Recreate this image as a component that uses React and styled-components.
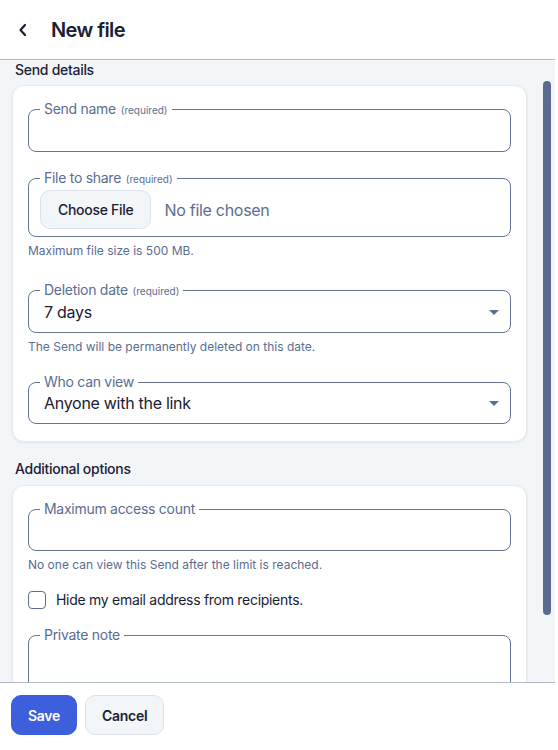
import React from "react";
import styled, { createGlobalStyle } from "styled-components";

const GlobalStyle = createGlobalStyle`
  html, body {
    margin: 0;
    padding: 0;
    background: #ffffff;
    font-family: Inter, "Noto Sans", sans-serif;
    letter-spacing: -0.018em;
    color: #1b2033;
  }
  * {
    box-sizing: border-box;
  }
  button, input {
    letter-spacing: inherit;
  }
`;

const Page = styled.div`
  display: flex;
  flex-direction: column;
  height: 750px;
  width: 555px;
  overflow: hidden;
`;

const Header = styled.header`
  display: flex;
  align-items: center;
  height: 60px;
  flex-shrink: 0;
  padding-left: 12px;
  border-bottom: 1px solid #b1b9cc;
  background: #ffffff;
`;

const BackButton = styled.button`
  display: flex;
  align-items: center;
  justify-content: center;
  width: 22px;
  height: 28px;
  padding: 0;
  margin-right: 17px;
  border: none;
  background: transparent;
  color: #1b2033;
`;

const Title = styled.h1`
  margin: 0;
  font-size: 20px;
  font-weight: 600;
  line-height: 28px;
  letter-spacing: -0.03em;
  color: #1b2033;
`;

const Body = styled.div`
  display: flex;
  flex: 1;
  min-height: 0;
  background: #f3f6f9;
`;

const Scroller = styled.main`
  flex: 1;
  overflow: hidden;
  padding: 0 12px;
`;

const Rail = styled.div`
  width: 16px;
  flex-shrink: 0;
  padding-left: 4px;
`;

const Thumb = styled.div`
  width: 8px;
  height: 534px;
  margin-top: 21px;
  border-radius: 4px;
  background: #5a6d91;
`;

const SectionTitle = styled.h2`
  margin: ${(p) => (p.$first ? "0 0 5px 3px" : "17px 0 6px 3px")};
  font-size: 14px;
  font-weight: 500;
  line-height: 20px;
  color: #1b2033;
`;

const Card = styled.section`
  background: #ffffff;
  border: 1px solid #e6e9ef;
  border-radius: 12px;
  padding: 15px 15px 17px;
  box-shadow: 0 1px 3px rgba(27, 32, 51, 0.08);
`;

const Group = styled.div`
  margin-bottom: ${(p) => p.$gap || "18px"};

  &:last-child {
    margin-bottom: 0;
  }
`;

const Fieldset = styled.fieldset`
  margin: 0;
  padding: 0 15px;
  border: 1px solid #63739a;
  border-radius: 8px;
  min-width: 0;
`;

const Legend = styled.legend`
  margin-left: -4px;
  padding: 0 4px;
  font-size: 14px;
  line-height: 16px;
  letter-spacing: -0.02em;
  color: #5a6d91;
`;

const Required = styled.span`
  font-size: 10px;
  margin-left: 2px;
  letter-spacing: 0;
`;

const TextInput = styled.input`
  display: block;
  width: 100%;
  height: 33px;
  padding: 0 0 7px;
  border: none;
  outline: none;
  background: transparent;
  font-family: inherit;
  font-size: 16px;
  color: #1b2033;
`;

const FileRow = styled.div`
  display: flex;
  align-items: center;
  gap: 13px;
  margin-left: -4px;
  padding: 3px 0 7px;
`;

const FileButton = styled.button`
  height: 39px;
  padding: 0 17px;
  border: 1px solid #dde2ea;
  border-radius: 10px;
  background: #f3f6f9;
  font-family: inherit;
  font-size: 14px;
  font-weight: 500;
  color: #1b2033;
`;

const FileStatus = styled.span`
  font-size: 16px;
  color: #5a6d91;
`;

const SelectBox = styled.div`
  display: flex;
  align-items: center;
  justify-content: space-between;
  height: 33px;
  padding-bottom: 7px;
  font-size: 16px;
  color: #1b2033;
`;

const Caret = styled.span`
  width: 0;
  height: 0;
  margin-right: -4px;
  border-left: 5px solid transparent;
  border-right: 5px solid transparent;
  border-top: 5px solid #5a6d91;
`;

const Hint = styled.p`
  margin: 6px 0 0;
  font-size: 12px;
  line-height: 16px;
  letter-spacing: 0;
  color: #5a6d91;
`;

const CheckRow = styled.label`
  display: flex;
  align-items: center;
  gap: 10px;
  font-size: 14px;
  line-height: 20px;
  color: #1b2033;
`;

const Box = styled.span`
  width: 18px;
  height: 18px;
  border: 1.5px solid #5a6d91;
  border-radius: 4px;
  background: #ffffff;
`;

const NoteArea = styled.div`
  height: 60px;
`;

const Footer = styled.footer`
  display: flex;
  gap: 8px;
  flex-shrink: 0;
  height: 68px;
  padding: 12px 11px;
  border-top: 1px solid #b1b9cc;
  background: #ffffff;
`;

const Button = styled.button`
  height: 40px;
  padding: 0 16px;
  border-radius: 10px;
  border: 1px solid ${(p) => (p.$primary ? "#3d5fdb" : "#dde2ea")};
  background: ${(p) => (p.$primary ? "#3d5fdb" : "#f3f6f9")};
  color: ${(p) => (p.$primary ? "#ffffff" : "#1b2033")};
  font-family: inherit;
  font-size: 14px;
  font-weight: 600;
`;

const Field = ({ label, required, children }) => (
  <Fieldset>
    <Legend>
      {label}
      {required && <Required> (required)</Required>}
    </Legend>
    {children}
  </Fieldset>
);

export default function App() {
  return (
    <>
      <GlobalStyle />
      <Page>
        <Header>
          <BackButton aria-label="Back">
            <svg width="10" height="14" viewBox="0 0 10 14" fill="none">
              <path
                d="M7 2 L2.5 7 L7 12"
                stroke="currentColor"
                strokeWidth="2.2"
                strokeLinecap="round"
                strokeLinejoin="round"
              />
            </svg>
          </BackButton>
          <Title>New file</Title>
        </Header>

        <Body>
          <Scroller>
            <SectionTitle $first>Send details</SectionTitle>
            <Card>
              <Group>
                <Field label="Send name" required>
                  <TextInput />
                </Field>
              </Group>
              <Group $gap="23px">
                <Field label="File to share" required>
                  <FileRow>
                    <FileButton>Choose File</FileButton>
                    <FileStatus>No file chosen</FileStatus>
                  </FileRow>
                </Field>
                <Hint>Maximum file size is 500 MB.</Hint>
              </Group>
              <Group $gap="19px">
                <Field label="Deletion date" required>
                  <SelectBox>
                    7 days
                    <Caret />
                  </SelectBox>
                </Field>
                <Hint>The Send will be permanently deleted on this date.</Hint>
              </Group>
              <Group>
                <Field label="Who can view">
                  <SelectBox>
                    Anyone with the link
                    <Caret />
                  </SelectBox>
                </Field>
              </Group>
            </Card>

            <SectionTitle>Additional options</SectionTitle>
            <Card>
              <Group $gap="17px">
                <Field label="Maximum access count">
                  <TextInput />
                </Field>
                <Hint>No one can view this Send after the limit is reached.</Hint>
              </Group>
              <Group $gap="17px">
                <CheckRow>
                  <Box />
                  Hide my email address from recipients.
                </CheckRow>
              </Group>
              <Group>
                <Field label="Private note">
                  <NoteArea />
                </Field>
              </Group>
            </Card>
          </Scroller>
          <Rail>
            <Thumb />
          </Rail>
        </Body>

        <Footer>
          <Button $primary>Save</Button>
          <Button>Cancel</Button>
        </Footer>
      </Page>
    </>
  );
}
